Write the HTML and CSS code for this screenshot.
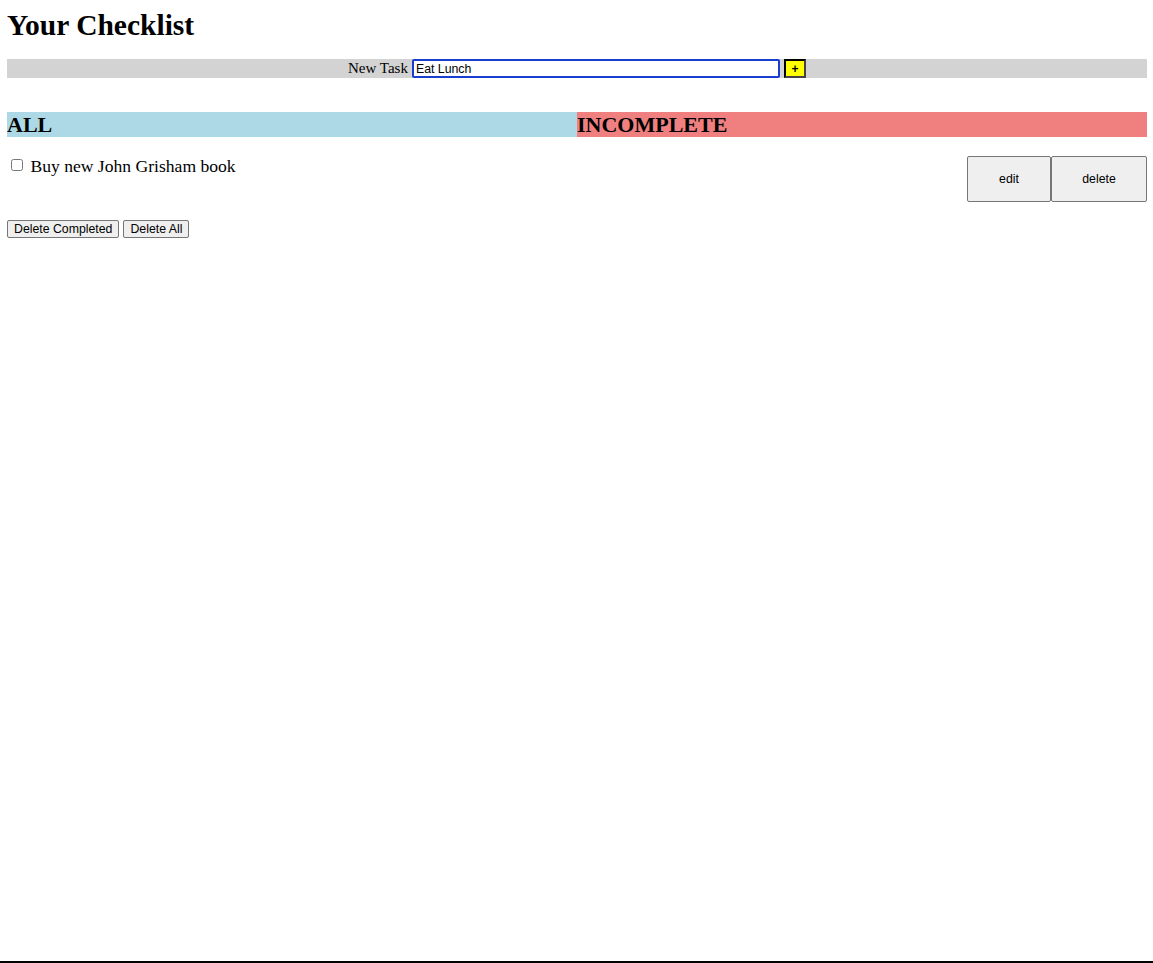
FILE: index.html
```html
<!DOCTYPE html>
<html>
<head>
<meta charset="utf-8">
<title>Checklist</title>
<link rel="stylesheet" href="styles.css">
</head>
<body>
<h1 class="title">Your Checklist</h1>
<form class="new-task">
  <label class="new-label" for="task">New Task</label>
  <input class="task-input" id="task" type="text" value="Eat Lunch">
  <button class="add-btn" type="button">+</button>
</form>
<div class="tabs">
  <h2 class="tab tab-all">ALL</h2>
  <h2 class="tab tab-incomplete">INCOMPLETE</h2>
</div>
<ul class="tasks">
  <li class="task">
    <label class="task-label"><input class="task-check" type="checkbox"> Buy new John Grisham book</label>
    <div class="task-actions">
      <button class="act act-edit" type="button">edit</button><button class="act act-delete" type="button">delete</button>
    </div>
  </li>
</ul>
<div class="bulk">
  <button class="bulk-btn" type="button">Delete Completed</button>
  <button class="bulk-btn" type="button">Delete All</button>
</div>
</body>
</html>
```
FILE: styles.css
```css
html {
  min-height: 100%;
  box-sizing: border-box;
  border-bottom: 2px solid #000;
}
body {
  margin: 8px 6px 8px 7px;
  font-family: "Liberation Serif", "Times New Roman", serif;
  font-size: 16px;
  color: #000;
}
.title {
  font-size: 29.5px;
  line-height: 34px;
  margin: 0 0 17px;
}
.new-task {
  background: #d3d3d3;
  display: flex;
  justify-content: center;
  align-items: center;
  height: 19px;
  margin: 0;
}
.new-label {
  margin-right: 4px;
  font-size: 15px;
}
.task-input {
  width: 368px;
  height: 19px;
  box-sizing: border-box;
  font-family: "Liberation Sans", Arial, sans-serif;
  font-size: 12.3px;
  color: #000;
  padding: 1px 2px;
  border: 2px solid #1a3fd0;
  border-radius: 2px;
  outline: none;
  margin: 0;
}
.add-btn {
  margin-left: 4px;
  background: #ffff00;
  border: 2px solid #000;
  border-right-color: #444;
  border-bottom-color: #444;
  font-family: "Liberation Sans", Arial, sans-serif;
  font-size: 12px;
  font-weight: bold;
  color: #000;
  width: 22px;
  height: 19px;
  padding: 0;
}
.tabs {
  display: flex;
  margin-top: 34px;
}
.tab {
  flex: 1;
  margin: 0;
  font-size: 22px;
  line-height: 25px;
  height: 25px;
}
.tab-all { background: #add8e6; }
.tab-incomplete { background: #f08080; }
.tasks {
  list-style: none;
  margin: 19px 0 0;
  padding: 0;
}
.task {
  display: flex;
  justify-content: space-between;
  align-items: flex-start;
}
.task-label {
  font-size: 17.6px;
  line-height: 20px;
  padding-left: 4px;
}
.task-check {
  margin: 0 3px 0 0;
  width: 12px;
  height: 12px;
  vertical-align: 1px;
}
.task-actions {
  display: flex;
}
.act {
  height: 46px;
  font-family: "Liberation Sans", Arial, sans-serif;
  font-size: 12.3px;
  color: #000;
  background: #efefef;
  border: 1px solid #767676;
  border-radius: 2px;
  margin: 0;
}
.act-edit { width: 84px; }
.act-delete { width: 96px; }
.bulk {
  margin-top: 18px;
  display: flex;
  gap: 4px;
}
.bulk-btn {
  font-family: "Liberation Sans", Arial, sans-serif;
  font-size: 12.3px;
  color: #000;
  background: #efefef;
  border: 1px solid #767676;
  border-radius: 2px;
  padding: 1px 6px;
  height: 18px;
  margin: 0;
}
```
